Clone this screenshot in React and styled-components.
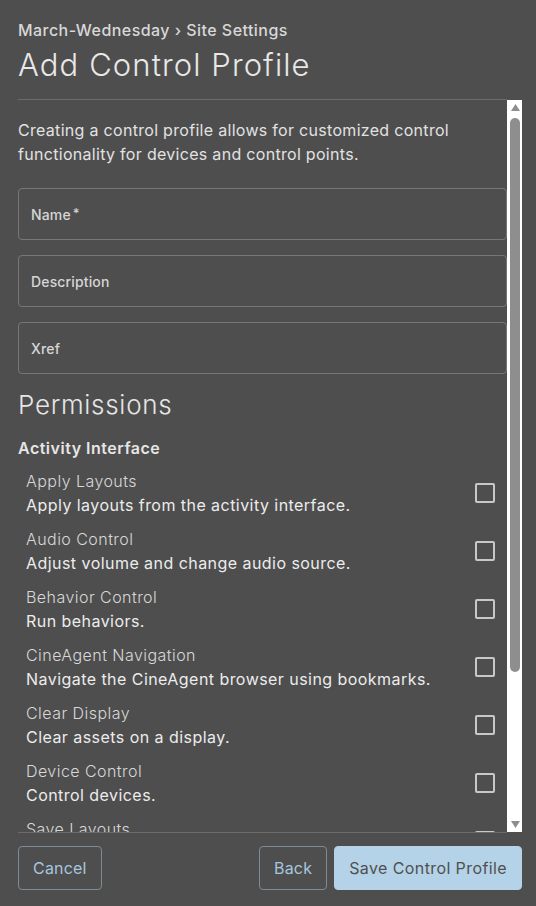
import React from 'react';
import styled, { createGlobalStyle } from 'styled-components';

const GlobalStyle = createGlobalStyle`
  html, body {
    margin: 0;
    padding: 0;
    background: #4e4e4e;
  }
  body {
    font-family: Inter, "Open Sans", sans-serif;
    color: #e4e4e4;
  }
  * {
    box-sizing: border-box;
  }
`;

const Page = styled.div`
  height: 906px;
  display: flex;
  flex-direction: column;
  padding: 0 14px 0 18px;
`;

const Header = styled.div`
  padding-top: 19px;
  margin-right: 15px;
  border-bottom: 1px solid #6b6b6b;
  height: 100px;
  flex-shrink: 0;
`;

const Breadcrumb = styled.div`
  font-size: 16px;
  line-height: 22px;
  font-weight: 500;
  letter-spacing: 0.45px;
  color: #d8d8d8;
`;

const Title = styled.h1`
  margin: 4px 0 0;
  font-size: 31px;
  line-height: 40px;
  font-weight: 300;
  letter-spacing: 1.1px;
  color: #e8e8e8;
`;

const Body = styled.div`
  flex: 1;
  min-height: 0;
  display: flex;
`;

const ScrollArea = styled.div`
  flex: 1;
  min-width: 0;
  overflow: hidden;
`;

// drawn scrollbar: the browser that takes the picture hides native ones
const Track = styled.div`
  width: 15px;
  flex-shrink: 0;
  background: #fff;
  display: flex;
  flex-direction: column;
  align-items: center;
`;

const ArrowButton = styled.div`
  height: 15px;
  width: 15px;
  display: flex;
  align-items: center;
  justify-content: center;
  padding-left: 1px;
  svg {
    display: block;
  }
`;

const Thumb = styled.div`
  margin-top: 3px;
  margin-left: 1px;
  width: 10px;
  height: 554px;
  border-radius: 5px;
  background: #8e8e8e;
`;

const TrackRest = styled.div`
  flex: 1;
`;

const Intro = styled.p`
  margin: 18px 0 22px;
  padding-right: 12px;
  font-size: 16px;
  line-height: 24px;
  letter-spacing: 0.3px;
  color: #e2e2e2;
`;

const Field = styled.div`
  height: 52px;
  border: 1px solid #777;
  border-radius: 4px;
  padding: 0 12px;
  display: flex;
  align-items: center;
  font-size: 14px;
  font-weight: 500;
  letter-spacing: 0.15px;
  color: #d6d6d6;
  & + & {
    margin-top: 15px;
  }
`;

const Required = styled.span`
  font-size: 13px;
  margin-left: 2px;
  align-self: flex-start;
  margin-top: 16px;
`;

const SectionTitle = styled.h2`
  margin: 15px 0 15px;
  font-size: 26px;
  line-height: 32px;
  font-weight: 300;
  letter-spacing: 0.7px;
  color: #e6e6e6;
`;

const GroupTitle = styled.h3`
  margin: 0 0 4px;
  font-size: 16px;
  line-height: 24px;
  font-weight: 600;
  letter-spacing: 0.5px;
  color: #e6e6e6;
`;

const Item = styled.label`
  display: flex;
  align-items: center;
  padding: 5px 12px 5px 8px;
  min-height: 58px;
`;

const ItemText = styled.div`
  flex: 1;
`;

const ItemName = styled.div`
  font-size: 16px;
  line-height: 24px;
  font-weight: 300;
  letter-spacing: 0.45px;
  color: #d8d8d8;
`;

const ItemDesc = styled.div`
  font-size: 16px;
  line-height: 24px;
  font-weight: 400;
  letter-spacing: 0.45px;
  color: #ececec;
`;

const Box = styled.span`
  width: 20px;
  height: 20px;
  border: 2px solid #c8c8c8;
  border-radius: 2px;
  flex-shrink: 0;
`;

const Footer = styled.div`
  display: flex;
  align-items: flex-start;
  height: 74px;
  flex-shrink: 0;
  padding-top: 14px;
  position: relative;
  &::before {
    content: '';
    position: absolute;
    top: 0;
    left: 0;
    right: 15px;
    border-top: 1px solid #6b6b6b;
  }
`;

const Spacer = styled.div`
  flex: 1;
`;

const Button = styled.button`
  height: 44px;
  padding: 0 14px;
  border-radius: 4px;
  font-family: inherit;
  font-size: 16px;
  letter-spacing: ${(p) => (p.$primary ? '0.4px' : '0.2px')};
  cursor: pointer;
  border: 1px solid ${(p) => (p.$primary ? '#b4d3e8' : '#7e8b95')};
  background: ${(p) => (p.$primary ? '#b4d3e8' : 'transparent')};
  color: ${(p) => (p.$primary ? '#505050' : '#a6c6de')};
  & + & {
    margin-left: 7px;
  }
`;

const permissions = [
  ['Apply Layouts', 'Apply layouts from the activity interface.'],
  ['Audio Control', 'Adjust volume and change audio source.'],
  ['Behavior Control', 'Run behaviors.'],
  ['CineAgent Navigation', 'Navigate the CineAgent browser using bookmarks.'],
  ['Clear Display', 'Clear assets on a display.'],
  ['Device Control', 'Control devices.'],
  ['Save Layouts', 'Save layouts from the activity interface.'],
];

const Arrow = ({ down }) => (
  <svg width="9" height="7" viewBox="0 0 9 7">
    <polygon points={down ? '0,0 9,0 4.5,7' : '4.5,0 9,7 0,7'} fill="#8e8e8e" />
  </svg>
);

export default function App() {
  return (
    <>
      <GlobalStyle />
      <Page>
        <Header>
          <Breadcrumb>March-Wednesday › Site Settings</Breadcrumb>
          <Title>Add Control Profile</Title>
        </Header>
        <Body>
          <ScrollArea>
            <Intro>
              Creating a control profile allows for customized control functionality for devices and control points.
            </Intro>
            <Field>Name<Required>*</Required></Field>
            <Field>Description</Field>
            <Field>Xref</Field>
            <SectionTitle>Permissions</SectionTitle>
            <GroupTitle>Activity Interface</GroupTitle>
            {permissions.map(([name, desc]) => (
              <Item key={name}>
                <ItemText>
                  <ItemName>{name}</ItemName>
                  <ItemDesc>{desc}</ItemDesc>
                </ItemText>
                <Box />
              </Item>
            ))}
          </ScrollArea>
          <Track>
            <ArrowButton><Arrow /></ArrowButton>
            <Thumb />
            <TrackRest />
            <ArrowButton><Arrow down /></ArrowButton>
          </Track>
        </Body>
        <Footer>
          <Button>Cancel</Button>
          <Spacer />
          <Button>Back</Button>
          <Button $primary>Save Control Profile</Button>
        </Footer>
      </Page>
    </>
  );
}
